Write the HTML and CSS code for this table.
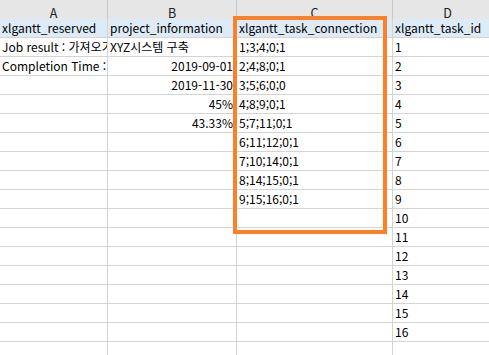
FILE: index.html
```html
<!DOCTYPE html>
<html lang="ko">
<head>
<meta charset="utf-8">
<link rel="stylesheet" href="styles.css">
</head>
<body>
<div class="sheet">
  <div class="grid">
    <div class="hd">A</div><div class="hd">B</div><div class="hd">C</div><div class="hd">D</div>

    <div class="c blue">xlgantt_reserved</div><div class="c blue">project_information</div><div class="c blue">xlgantt_task_connection</div><div class="c blue">xlgantt_task_id</div>

    <div class="c">Job result : 가져오기</div><div class="c">XYZ시스템 구축</div><div class="c">1;3;4;0;1</div><div class="c">1</div>
    <div class="c">Completion Time : 2019</div><div class="c r">2019-09-01</div><div class="c">2;4;8;0;1</div><div class="c">2</div>
    <div class="c"></div><div class="c r">2019-11-30</div><div class="c">3;5;6;0;0</div><div class="c">3</div>
    <div class="c"></div><div class="c r">45%</div><div class="c">4;8;9;0;1</div><div class="c">4</div>
    <div class="c"></div><div class="c r">43.33%</div><div class="c">5;7;11;0;1</div><div class="c">5</div>
    <div class="c"></div><div class="c"></div><div class="c">6;11;12;0;1</div><div class="c">6</div>
    <div class="c"></div><div class="c"></div><div class="c">7;10;14;0;1</div><div class="c">7</div>
    <div class="c"></div><div class="c"></div><div class="c">8;14;15;0;1</div><div class="c">8</div>
    <div class="c"></div><div class="c"></div><div class="c">9;15;16;0;1</div><div class="c">9</div>
    <div class="c"></div><div class="c"></div><div class="c"></div><div class="c">10</div>
    <div class="c"></div><div class="c"></div><div class="c"></div><div class="c">11</div>
    <div class="c"></div><div class="c"></div><div class="c"></div><div class="c">12</div>
    <div class="c"></div><div class="c"></div><div class="c"></div><div class="c">13</div>
    <div class="c"></div><div class="c"></div><div class="c"></div><div class="c">14</div>
    <div class="c"></div><div class="c"></div><div class="c"></div><div class="c">15</div>
    <div class="c"></div><div class="c"></div><div class="c"></div><div class="c">16</div>
    <div class="c"></div><div class="c"></div><div class="c"></div><div class="c"></div>
  </div>
  <div class="highlight"></div>
</div>
</body>
</html>
```
FILE: styles.css
```css
html, body {
  margin: 0;
  padding: 0;
  background: #ffffff;
  overflow: hidden;
}
.sheet {
  position: relative;
  width: 489px;
  height: 355px;
  overflow: hidden;
  font-family: "Noto Sans CJK KR", "Noto Sans", sans-serif;
  font-size: 12px;
  color: #000;
}
.grid {
  display: grid;
  grid-template-columns: 108px 129px 156px 110px;
  grid-auto-rows: 19px;
}
.hd {
  height: 22px;
  box-sizing: border-box;
  background: #e6e6e6;
  border-right: 1px solid #c9c9c9;
  border-bottom: 1px solid #d0d0d0;
  padding-top: 6px;
  line-height: 13px;
  text-align: center;
  font-size: 12.5px;
  color: #222;
}
.c {
  box-sizing: border-box;
  border-right: 1px solid #d4d4d4;
  border-bottom: 1px solid #d4d4d4;
  padding: 0 2px;
  white-space: nowrap;
  overflow: hidden;
  line-height: 18px;
}
.blue {
  background: #ddebf7;
}
.r {
  text-align: right;
  padding-right: 3px;
}
.highlight {
  position: absolute;
  left: 233px;
  top: 16px;
  width: 154px;
  height: 218px;
  box-sizing: border-box;
  border: 4px solid #ff7f27;
}
```
